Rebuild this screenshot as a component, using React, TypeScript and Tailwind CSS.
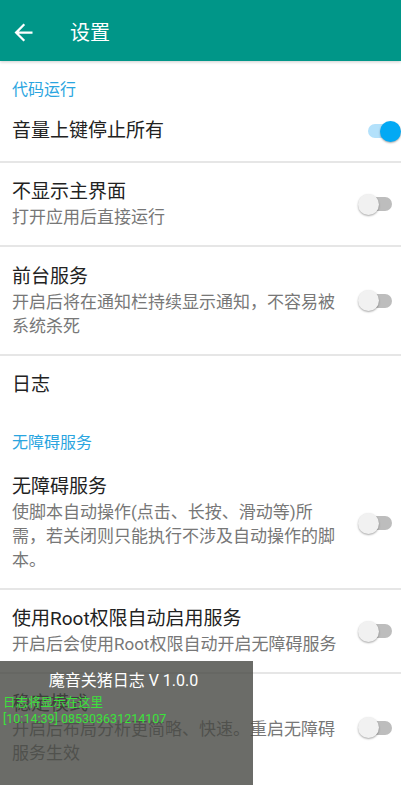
import React from "react";

type Row = {
  title: string;
  desc?: string;
  toggle?: "on" | "off";
  h: string;
};

function Toggle({ on }: { on: boolean }) {
  if (on) {
    return (
      <div className="relative w-[33px] h-[21px] flex items-center shrink-0">
        <div className="absolute left-0 right-[4px] h-[14px] rounded-full bg-[#b3e1fb]" />
        <div className="absolute right-0 w-[21px] h-[21px] rounded-full bg-[#03a9f4] shadow-[0_1px_2px_rgba(0,0,0,0.35)]" />
      </div>
    );
  }
  return (
    <div className="relative w-[34px] h-[21px] flex items-center shrink-0 mr-[9px]">
      <div className="absolute left-[4px] right-0 h-[14px] rounded-full bg-[#bdbdbd]" />
      <div className="absolute left-0 w-[21px] h-[21px] rounded-full bg-[#f1f1f1] shadow-[0_1px_2px_rgba(0,0,0,0.35)]" />
    </div>
  );
}

function SettingRow({ row }: { row: Row }) {
  return (
    <div className={`flex items-center pl-3 ${row.h}`}>
      <div className="w-[328px] flex flex-col">
        <div className="text-[19px] leading-[26px] text-[#222222]">{row.title}</div>
        {row.desc && (
          <div className="text-[17px] leading-[24px] text-[#777777]">{row.desc}</div>
        )}
      </div>
      <div className="flex-1 flex justify-end">
        {row.toggle && <Toggle on={row.toggle === "on"} />}
      </div>
    </div>
  );
}

function Divider() {
  return <div className="h-[2px] bg-[#e6e6e6]" />;
}

export default function App() {
  return (
    <div
      className="relative w-[401px] h-[785px] overflow-hidden bg-white"
      style={{ fontFamily: 'Roboto, "Noto Sans CJK SC", sans-serif' }}
    >
      <div className="h-[61px] bg-[#009688] flex items-center shadow-[0_1px_3px_rgba(0,0,0,0.2)]">
        <svg width="27" height="27" viewBox="0 0 24 24" className="ml-[10px] mt-[4px]" fill="#ffffff">
          <path d="M20 11H7.83l5.59-5.59L12 4l-8 8 8 8 1.41-1.41L7.83 13H20v-2z" />
        </svg>
        <span className="ml-[33px] mt-[4px] text-[20px] text-white">设置</span>
      </div>

      <div className="pt-[18px] pl-3 h-[40px] flex items-center text-[16px] leading-[22px] text-[#2aa5e0]">
        代码运行
      </div>
      <SettingRow row={{ title: "音量上键停止所有", toggle: "on", h: "h-[60px]" }} />
      <Divider />
      <SettingRow
        row={{ title: "不显示主界面", desc: "打开应用后直接运行", toggle: "off", h: "h-[82px]" }}
      />
      <Divider />
      <SettingRow
        row={{
          title: "前台服务",
          desc: "开启后将在通知栏持续显示通知，不容易被系统杀死",
          toggle: "off",
          h: "h-[107px]",
        }}
      />
      <Divider />
      <SettingRow row={{ title: "日志", h: "h-[58px]" }} />

      <div className="h-[44px] pl-3 flex items-end pb-[4px] text-[16px] leading-[22px] text-[#2aa5e0]">
        无障碍服务
      </div>
      <SettingRow
        row={{
          title: "无障碍服务",
          desc: "使脚本自动操作(点击、长按、滑动等)所需，若关闭则只能执行不涉及自动操作的脚本。",
          toggle: "off",
          h: "h-[130px]",
        }}
      />
      <Divider />
      <SettingRow
        row={{
          title: "使用Root权限自动启用服务",
          desc: "开启后会使用Root权限自动开启无障碍服务",
          toggle: "off",
          h: "h-[82px]",
        }}
      />
      <Divider />
      <SettingRow
        row={{
          title: "稳定模式",
          desc: "开启后布局分析更简略、快速。重启无障碍服务生效",
          toggle: "off",
          h: "h-[107px]",
        }}
      />

      <div className="absolute left-0 top-[661px] w-[253px] h-[124px] bg-[rgba(70,71,66,0.8)]">
        <div className="text-center text-[16px] leading-[20px] text-white mt-[10px] pr-[6px]">
          魔音关猪日志 V 1.0.0
        </div>
        <div className="pl-[3px] mt-[4px] text-[12.5px] leading-[16px] text-[#3be23b]">
          <div>日志将显示在这里</div>
          <div>[10:14:39] 085303631214107</div>
        </div>
      </div>
    </div>
  );
}
